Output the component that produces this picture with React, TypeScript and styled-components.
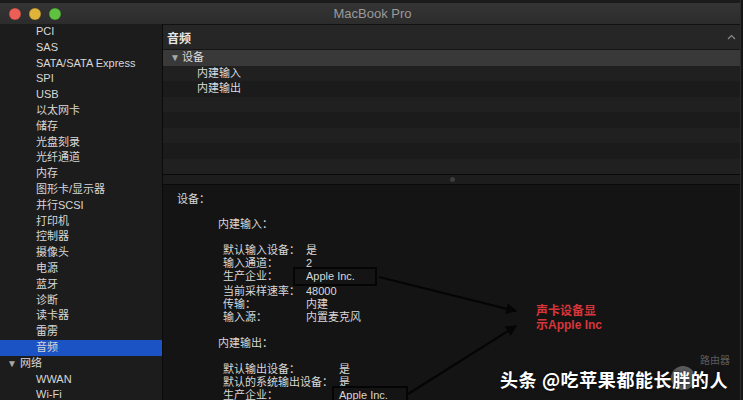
import React from "react";
import styled, { createGlobalStyle } from "styled-components";

const GlobalStyle = createGlobalStyle`
  html, body { margin: 0; padding: 0; background: #121212; }
  body {
    font-family: "Liberation Sans", "Noto Sans CJK SC", sans-serif;
    -webkit-font-smoothing: antialiased;
  }
`;

const Root = styled.div`
  position: relative;
  width: 743px;
  height: 400px;
  overflow: hidden;
  background: #161616;
`;

const Window = styled.div`
  width: 740px;
  height: 400px;
  display: flex;
  flex-direction: column;
  border-right: 1px solid #2c2c2c;
  background: #141414;
`;

const TitleBar = styled.div`
  height: 21px;
  border-top: 3px solid #1b1b1b;
  background: linear-gradient(#353535, #2c2c2c);
  border-bottom: 1px solid #111;
  display: flex;
  align-items: center;
  flex-shrink: 0;
`;

const Lights = styled.div`
  display: flex;
  gap: 8px;
  padding-left: 9px;
`;

const Light = styled.span<{ $c: string }>`
  width: 12px;
  height: 12px;
  border-radius: 50%;
  background: ${(p) => p.$c};
  box-shadow: inset 0 0 0 0.5px rgba(0, 0, 0, 0.3);
`;

const Title = styled.div`
  flex: 1;
  text-align: center;
  color: #9a9a9a;
  font-size: 13px;
  margin-right: 56px;
`;

const Main = styled.div`
  flex: 1;
  display: flex;
  min-height: 0;
`;

const Sidebar = styled.div`
  width: 162px;
  background: #1c1c1c;
  border-right: 1px solid #0b0b0b;
  display: flex;
  flex-direction: column;
  margin-top: -1px;
  flex-shrink: 0;
`;

const SideItem = styled.div<{ $selected?: boolean; $group?: boolean }>`
  height: 15.8px;
  line-height: 15.8px;
  font-size: 11px;
  color: #d8d8d8;
  padding-left: ${(p) => (p.$group ? "7px" : "36px")};
  background: ${(p) => (p.$selected ? "#1c53c4" : "transparent")};
  white-space: nowrap;
  display: flex;
  align-items: center;
  gap: 3px;
  flex-shrink: 0;
`;

const Tri = styled.span`
  font-size: 10px;
  color: #a8a8a8;
  width: 10px;
`;

const Content = styled.div`
  flex: 1;
  display: flex;
  flex-direction: column;
  min-width: 0;
`;

const Header = styled.div`
  height: 24px;
  background: #262626;
  border-bottom: 1px solid #161616;
  display: flex;
  align-items: center;
  justify-content: space-between;
  padding: 0 4px 0 4px;
  color: #e6e6e6;
  font-size: 12px;
  font-weight: bold;
  flex-shrink: 0;
`;

const TreeRow = styled.div<{ $tone: "head" | "a" | "b"; $indent: number }>`
  height: 15.5px;
  line-height: 15.5px;
  font-size: 11px;
  color: #dcdcdc;
  padding-left: ${(p) => p.$indent}px;
  background: ${(p) =>
    p.$tone === "head" ? "#393939" : p.$tone === "a" ? "#202020" : "#1b1b1b"};
  display: flex;
  align-items: center;
  gap: 2px;
  flex-shrink: 0;
`;

const Splitter = styled.div`
  height: 9px;
  border-top: 1px solid #0a0a0a;
  border-bottom: 1px solid #0a0a0a;
  background: #1d1d1d;
  display: flex;
  align-items: center;
  justify-content: center;
  flex-shrink: 0;
`;

const Dot = styled.span`
  width: 5px;
  height: 5px;
  border-radius: 50%;
  background: #3c3c3c;
  margin-left: 2px;
`;

const Detail = styled.div`
  flex: 1;
  background: #141414;
  padding: 8px 0 0 14px;
  color: #d8d8d8;
  font-size: 11px;
  line-height: 13px;
`;

const SectionTitle = styled.div<{ $indent: number; $gap: number }>`
  padding-left: ${(p) => p.$indent}px;
  margin-bottom: ${(p) => p.$gap}px;
  white-space: nowrap;
`;

const Props = styled.div`
  display: grid;
  grid-template-columns: max-content max-content;
  column-gap: 6px;
  padding-left: 46px;
  margin-bottom: 13px;
`;

const Label = styled.span`
  white-space: nowrap;
`;

const Value = styled.span<{ $boxed?: boolean; $pad?: number; $padR?: number }>`
  white-space: nowrap;
  ${(p) =>
    p.$boxed
      ? `border: 2px solid #050505; margin-left: -${(p.$pad ?? 13) + 2}px; padding: 1px ${p.$padR ?? 20}px 1px ${p.$pad ?? 13}px; margin-top: -3px; margin-bottom: -1px; width: fit-content;`
      : ""}
`;

const Overlay = styled.svg`
  position: absolute;
  inset: 0;
  pointer-events: none;
`;

const Note = styled.div`
  position: absolute;
  left: 536px;
  top: 304px;
  color: #d8353a;
  font-size: 12px;
  font-weight: bold;
  line-height: 14px;
  width: 80px;
`;

const Watermark = styled.div`
  position: absolute;
  left: 500px;
  top: 367px;
  color: #ffffff;
  font-family: "Noto Sans CJK SC", sans-serif;
  font-size: 18px;
  font-weight: bold;
  letter-spacing: 0.6px;
  line-height: 24px;
  text-shadow: 0 0 3px rgba(0, 0, 0, 0.8);
  white-space: nowrap;
`;

const Badge = styled.div`
  position: absolute;
  left: 671px;
  top: 366px;
  width: 24px;
  height: 24px;
  border-radius: 50%;
  background: rgba(255, 255, 255, 0.3);
`;

const BadgeText = styled.div`
  position: absolute;
  left: 700px;
  top: 354px;
  color: rgba(255, 255, 255, 0.3);
  font-family: "Noto Sans CJK SC", sans-serif;
  font-size: 10px;
  line-height: 12px;
`;

const sideItems = [
  "PCI",
  "SAS",
  "SATA/SATA Express",
  "SPI",
  "USB",
  "以太网卡",
  "储存",
  "光盘刻录",
  "光纤通道",
  "内存",
  "图形卡/显示器",
  "并行SCSI",
  "打印机",
  "控制器",
  "摄像头",
  "电源",
  "蓝牙",
  "诊断",
  "读卡器",
  "雷雳",
  "音频",
];

const inputProps: [string, string, boolean?][] = [
  ["默认输入设备：", "是"],
  ["输入通道：", "2"],
  ["生产企业：", "Apple Inc.", true],
  ["当前采样速率：", "48000"],
  ["传输：", "内建"],
  ["输入源：", "内置麦克风"],
];

const outputProps: [string, string, boolean?][] = [
  ["默认输出设备：", "是"],
  ["默认的系统输出设备：", "是"],
  ["生产企业：", "Apple Inc.", true],
];

export default function App() {
  return (
    <Root>
      <GlobalStyle />
      <Window>
        <TitleBar>
          <Lights>
            <Light $c="#ec5f57" />
            <Light $c="#e0b33b" />
            <Light $c="#5ec140" />
          </Lights>
          <Title>MacBook Pro</Title>
        </TitleBar>
        <Main>
          <Sidebar>
            {sideItems.map((s) => (
              <SideItem key={s} $selected={s === "音频"}>
                {s}
              </SideItem>
            ))}
            <SideItem $group>
              <Tri>▼</Tri>网络
            </SideItem>
            <SideItem>WWAN</SideItem>
            <SideItem>Wi-Fi</SideItem>
          </Sidebar>
          <Content>
            <Header>
              <span>音频</span>
              <svg width="9" height="6" viewBox="0 0 9 6">
                <polyline points="1,5 4.5,1.5 8,5" fill="none" stroke="#8a8a8a" strokeWidth="1.2" />
              </svg>
            </Header>
            <TreeRow $tone="head" $indent={7}>
              <Tri>▼</Tri>设备
            </TreeRow>
            <TreeRow $tone="a" $indent={34}>内建输入</TreeRow>
            <TreeRow $tone="b" $indent={34}>内建输出</TreeRow>
            <TreeRow $tone="a" $indent={34} />
            <TreeRow $tone="b" $indent={34} />
            <TreeRow $tone="a" $indent={34} />
            <TreeRow $tone="b" $indent={34} />
            <TreeRow $tone="a" $indent={34} />
            <Splitter>
              <Dot />
            </Splitter>
            <Detail>
              <SectionTitle $indent={0} $gap={12}>设备：</SectionTitle>
              <SectionTitle $indent={41} $gap={13}>内建输入：</SectionTitle>
              <Props>
                {inputProps.map(([l, v, b]) => (
                  <React.Fragment key={l}>
                    <Label>{l}</Label>
                    <Value $boxed={b} $pad={11} $padR={20}>{v}</Value>
                  </React.Fragment>
                ))}
              </Props>
              <SectionTitle $indent={41} $gap={13}>内建输出：</SectionTitle>
              <Props>
                {outputProps.map(([l, v, b]) => (
                  <React.Fragment key={l}>
                    <Label>{l}</Label>
                    <Value $boxed={b} $pad={5} $padR={18}>{v}</Value>
                  </React.Fragment>
                ))}
              </Props>
            </Detail>
          </Content>
        </Main>
      </Window>
      <Overlay width="743" height="400" viewBox="0 0 743 400">
        <defs>
          <marker
            id="ah"
            viewBox="0 0 10 10"
            refX="9"
            refY="5"
            markerWidth="5"
            markerHeight="5"
            orient="auto"
          >
            <path d="M0 0 L10 5 L0 10 Z" fill="#050505" />
          </marker>
        </defs>
        <line x1="379" y1="277" x2="516" y2="311" stroke="#050505" strokeWidth="2.2" markerEnd="url(#ah)" />
        <line x1="408" y1="394" x2="516" y2="326" stroke="#050505" strokeWidth="2.2" markerEnd="url(#ah)" />
      </Overlay>
      <Note>
        声卡设备显
        <br />
        示Apple Inc
      </Note>
      <Badge />
      <BadgeText>路由器</BadgeText>
      <Watermark>头条 @吃苹果都能长胖的人</Watermark>
    </Root>
  );
}
